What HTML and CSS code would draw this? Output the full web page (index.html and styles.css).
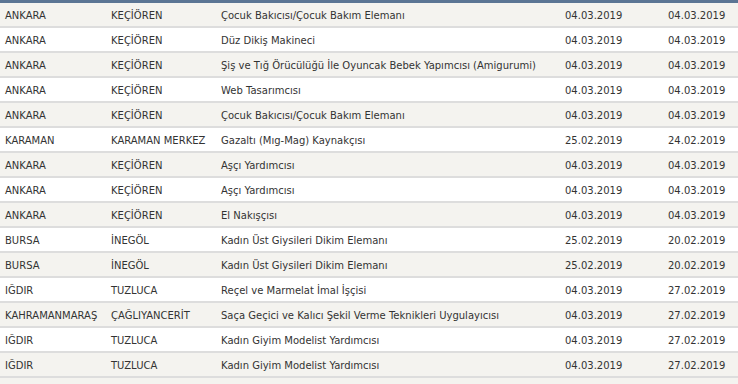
FILE: index.html
```html
<!DOCTYPE html>
<html lang="tr">
<head>
<meta charset="utf-8">
<link rel="stylesheet" href="styles.css">
</head>
<body>
<div class="topbar"></div>
<table class="list">
<colgroup>
<col class="c-il"><col class="c-ilce"><col class="c-kurs"><col class="c-d1"><col class="c-d2">
</colgroup>
<tbody>
<tr><td>ANKARA</td><td>KEÇİÖREN</td><td>Çocuk Bakıcısı/Çocuk Bakım Elemanı</td><td>04.03.2019</td><td>04.03.2019</td></tr>
<tr><td>ANKARA</td><td>KEÇİÖREN</td><td>Düz Dikiş Makineci</td><td>04.03.2019</td><td>04.03.2019</td></tr>
<tr><td>ANKARA</td><td>KEÇİÖREN</td><td>Şiş ve Tığ Örücülüğü İle Oyuncak Bebek Yapımcısı (Amigurumi)</td><td>04.03.2019</td><td>04.03.2019</td></tr>
<tr><td>ANKARA</td><td>KEÇİÖREN</td><td>Web Tasarımcısı</td><td>04.03.2019</td><td>04.03.2019</td></tr>
<tr><td>ANKARA</td><td>KEÇİÖREN</td><td>Çocuk Bakıcısı/Çocuk Bakım Elemanı</td><td>04.03.2019</td><td>04.03.2019</td></tr>
<tr><td>KARAMAN</td><td>KARAMAN MERKEZ</td><td>Gazaltı (Mıg-Mag) Kaynakçısı</td><td>25.02.2019</td><td>24.02.2019</td></tr>
<tr><td>ANKARA</td><td>KEÇİÖREN</td><td>Aşçı Yardımcısı</td><td>04.03.2019</td><td>04.03.2019</td></tr>
<tr><td>ANKARA</td><td>KEÇİÖREN</td><td>Aşçı Yardımcısı</td><td>04.03.2019</td><td>04.03.2019</td></tr>
<tr><td>ANKARA</td><td>KEÇİÖREN</td><td>El Nakışçısı</td><td>04.03.2019</td><td>04.03.2019</td></tr>
<tr><td>BURSA</td><td>İNEGÖL</td><td>Kadın Üst Giysileri Dikim Elemanı</td><td>25.02.2019</td><td>20.02.2019</td></tr>
<tr><td>BURSA</td><td>İNEGÖL</td><td>Kadın Üst Giysileri Dikim Elemanı</td><td>25.02.2019</td><td>20.02.2019</td></tr>
<tr><td>IĞDIR</td><td>TUZLUCA</td><td>Reçel ve Marmelat İmal İşçisi</td><td>04.03.2019</td><td>27.02.2019</td></tr>
<tr><td>KAHRAMANMARAŞ</td><td>ÇAĞLIYANCERİT</td><td>Saça Geçici ve Kalıcı Şekil Verme Teknikleri Uygulayıcısı</td><td>04.03.2019</td><td>27.02.2019</td></tr>
<tr><td>IĞDIR</td><td>TUZLUCA</td><td>Kadın Giyim Modelist Yardımcısı</td><td>04.03.2019</td><td>27.02.2019</td></tr>
<tr><td>IĞDIR</td><td>TUZLUCA</td><td>Kadın Giyim Modelist Yardımcısı</td><td>04.03.2019</td><td>27.02.2019</td></tr>
</tbody>
</table>
</body>
</html>
```
FILE: styles.css
```css
html, body {
  margin: 0;
  padding: 0;
  background: #f4f3ef;
}
body {
  font-family: "DejaVu Sans", Verdana, sans-serif;
  font-size: 10px;
  color: #333;
  width: 738px;
}
.topbar {
  height: 3px;
  background: #5b7594;
}
.list {
  width: 738px;
  border-collapse: collapse;
  table-layout: fixed;
}
.c-il { width: 106px; }
.c-ilce { width: 110px; }
.c-kurs { width: 344px; }
.c-d1 { width: 103px; }
.c-d2 { width: 75px; }
.list td {
  height: 21px;
  padding: 2px 0 0 5px;
  border-bottom: 2px solid #dddddd;
  white-space: nowrap;
  overflow: hidden;
  vertical-align: middle;
  line-height: 21px;
}
.list tr:nth-child(odd) td { background: #f4f3ef; }
.list tr:nth-child(even) td { background: #ffffff; }
```
